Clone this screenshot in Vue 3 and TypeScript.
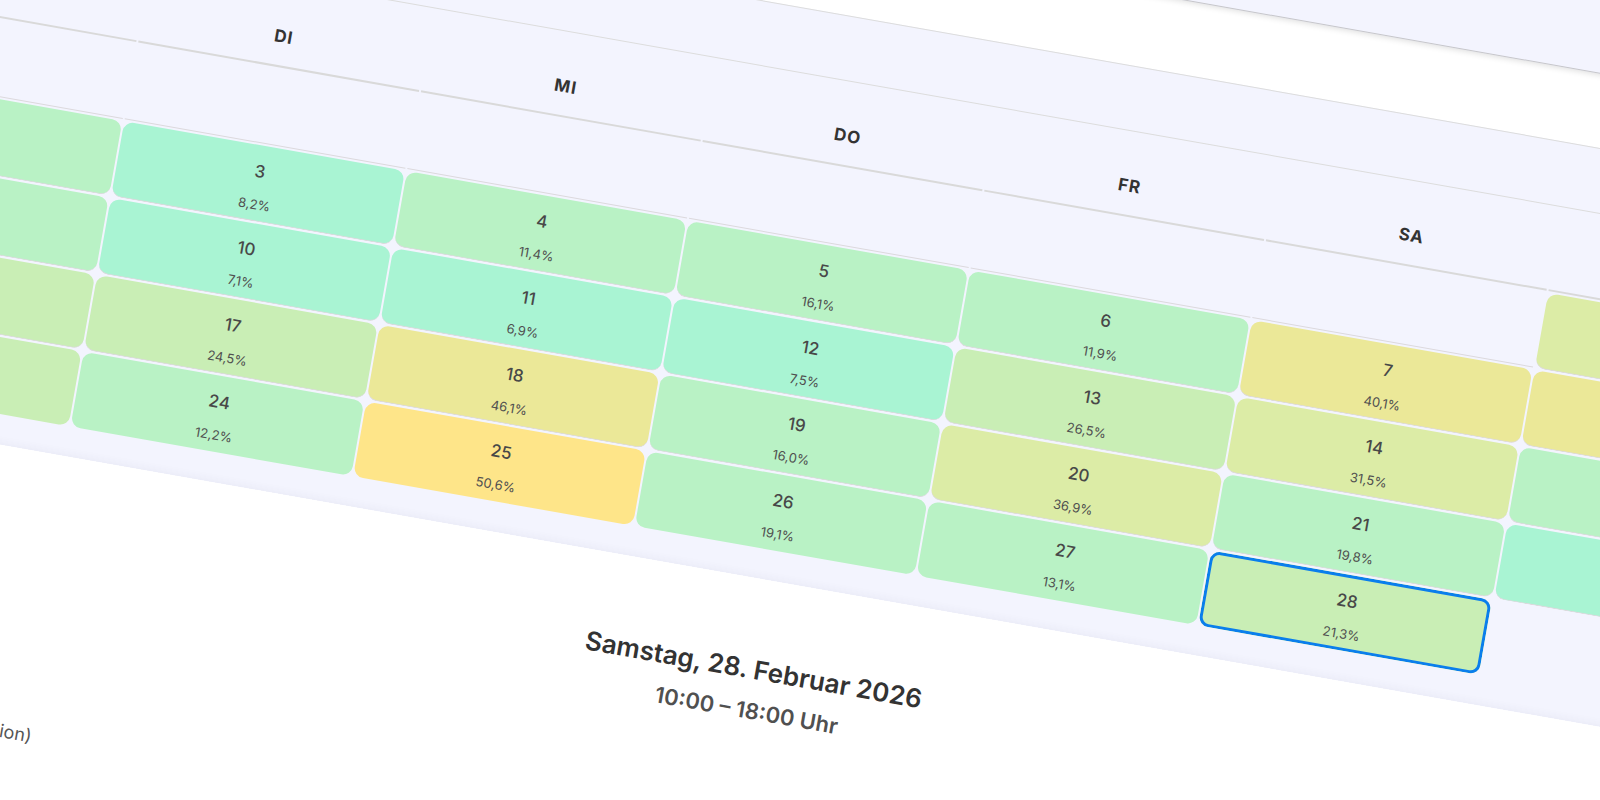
<script setup lang="ts">
import { ref } from 'vue'

type Level = 'l1' | 'l2' | 'l3' | 'l4' | 'l5' | 'l6'

interface Day {
  day: number
  level: Level
  load?: string
}

interface Weekday {
  name: string
  label: string
}

const weekdays: Weekday[] = [
  { name: 'Montag', label: '' },
  { name: 'Dienstag', label: 'DI' },
  { name: 'Mittwoch', label: 'MI' },
  { name: 'Donnerstag', label: 'DO' },
  { name: 'Freitag', label: 'FR' },
  { name: 'Samstag', label: 'SA' },
  { name: 'Sonntag', label: '' },
]

const weeks: (Day | null)[][] = [
  [null, null, null, null, null, null, { day: 1, level: 'l4' }],
  [
    { day: 2, level: 'l2' },
    { day: 3, level: 'l1', load: '8,2%' },
    { day: 4, level: 'l2', load: '11,4%' },
    { day: 5, level: 'l2', load: '16,1%' },
    { day: 6, level: 'l2', load: '11,9%' },
    { day: 7, level: 'l5', load: '40,1%' },
    { day: 8, level: 'l5' },
  ],
  [
    { day: 9, level: 'l2' },
    { day: 10, level: 'l1', load: '7,1%' },
    { day: 11, level: 'l1', load: '6,9%' },
    { day: 12, level: 'l1', load: '7,5%' },
    { day: 13, level: 'l3', load: '26,5%' },
    { day: 14, level: 'l4', load: '31,5%' },
    { day: 15, level: 'l2' },
  ],
  [
    { day: 16, level: 'l3' },
    { day: 17, level: 'l3', load: '24,5%' },
    { day: 18, level: 'l5', load: '46,1%' },
    { day: 19, level: 'l2', load: '16,0%' },
    { day: 20, level: 'l4', load: '36,9%' },
    { day: 21, level: 'l2', load: '19,8%' },
    { day: 22, level: 'l1' },
  ],
  [
    { day: 23, level: 'l3' },
    { day: 24, level: 'l2', load: '12,2%' },
    { day: 25, level: 'l6', load: '50,6%' },
    { day: 26, level: 'l2', load: '19,1%' },
    { day: 27, level: 'l2', load: '13,1%' },
    { day: 28, level: 'l3', load: '21,3%' },
    null,
  ],
]

const selected = ref<number>(28)
</script>

<template>
  <div class="viewport">
    <main class="stage">
      <header class="topbar"></header>

      <section class="panel">
        <div class="panel-head"></div>
        <table class="calendar">
          <thead>
            <tr>
              <th v-for="weekday in weekdays" :key="weekday.name" scope="col" :aria-label="weekday.name">
                {{ weekday.label }}
              </th>
            </tr>
          </thead>
          <tbody>
            <tr v-for="(week, w) in weeks" :key="w">
              <td
                v-for="(entry, d) in week"
                :key="d"
                :class="entry ? ['filled', entry.level, { selected: entry.day === selected }] : 'blank'"
              >
                <button
                  v-if="entry"
                  type="button"
                  class="day"
                  :aria-label="`${entry.day}. Februar`"
                  @click="selected = entry.day"
                >
                  <template v-if="entry.load">
                    <span class="number">{{ entry.day }}</span>
                    <span class="load">{{ entry.load }}</span>
                  </template>
                </button>
              </td>
            </tr>
          </tbody>
        </table>
      </section>

      <section class="details">
        <h2>Samstag, 28. Februar 2026</h2>
        <p class="hours">10:00 – 18:00 Uhr</p>
        <p class="note">ion)</p>
      </section>
    </main>
  </div>
</template>

<style>
body {
  margin: 0;
  background: #fff;
}
</style>

<style scoped>
.viewport {
  display: flex;
  align-items: center;
  justify-content: center;
  height: 100vh;
  overflow: hidden;
  background: #fff;
  color: #333;
  font-family: Inter, "Liberation Sans", sans-serif;
}

.stage {
  flex: none;
  box-sizing: border-box;
  width: 125%;
  height: 140vh;
  margin: 1px 0 0 1px;
  transform: rotate(10deg);
}

.topbar {
  box-sizing: border-box;
  height: 99px;
  border-bottom: 1px solid #c6c6ca;
  background: #f3f4fe;
  box-shadow: 0 1px 6px rgba(0, 0, 0, 0.14);
}

.panel {
  margin-top: 73px;
  padding-bottom: 28px;
  border-top: 1px solid #dcdcdc;
  background: #f3f4fe;
  box-shadow: inset 0 -8px 8px -6px rgba(60, 60, 90, 0.05);
}

.panel-head {
  height: 63px;
  border-bottom: 1px solid #dcdcdc;
}

.calendar {
  width: calc(100% + 6px);
  margin: 0 -3px;
  border-collapse: separate;
  border-spacing: 2px;
  table-layout: fixed;
}

th {
  padding: 42px 0 19px;
  border-bottom: 2px solid #d9d9d9;
  font-size: 17px;
  font-weight: 700;
  line-height: 20px;
  letter-spacing: 1px;
  text-align: center;
}

td {
  box-sizing: border-box;
  height: 76px;
  padding: 0;
  border-bottom: 1px solid #dcd9dd;
  vertical-align: top;
}

tr:last-child td {
  border-bottom: 0;
}

.filled {
  border-radius: 10px;
}

.l1 { background: #a9f4d3; }
.l2 { background: #b9f2c5; }
.l3 { background: #c9eeb5; }
.l4 { background: #dceca6; }
.l5 { background: #ebe898; }
.l6 { background: #fee589; }

.selected {
  box-shadow: inset 0 0 0 3px #0a7eec;
}

.day {
  display: flex;
  flex-direction: column;
  align-items: center;
  gap: 15px;
  width: 100%;
  padding: 16px 0 8px;
  border: 0;
  background: none;
  color: #484848;
  font-family: inherit;
  cursor: pointer;
}

.number {
  font-size: 17px;
  font-weight: 500;
  line-height: 20px;
}

.load {
  color: #505050;
  font-size: 13px;
  line-height: 16px;
}

.details {
  padding-top: 75px;
}

h2 {
  margin: 0;
  font-size: 26px;
  font-weight: 600;
  line-height: 32px;
  text-align: center;
}

.hours {
  margin: 13px 0 0;
  color: #505050;
  font-size: 22px;
  font-weight: 600;
  line-height: 24px;
  text-align: center;
}

.note {
  margin: 126px 0 0 268px;
  color: #555;
  font-size: 18px;
  line-height: 24px;
}
</style>
